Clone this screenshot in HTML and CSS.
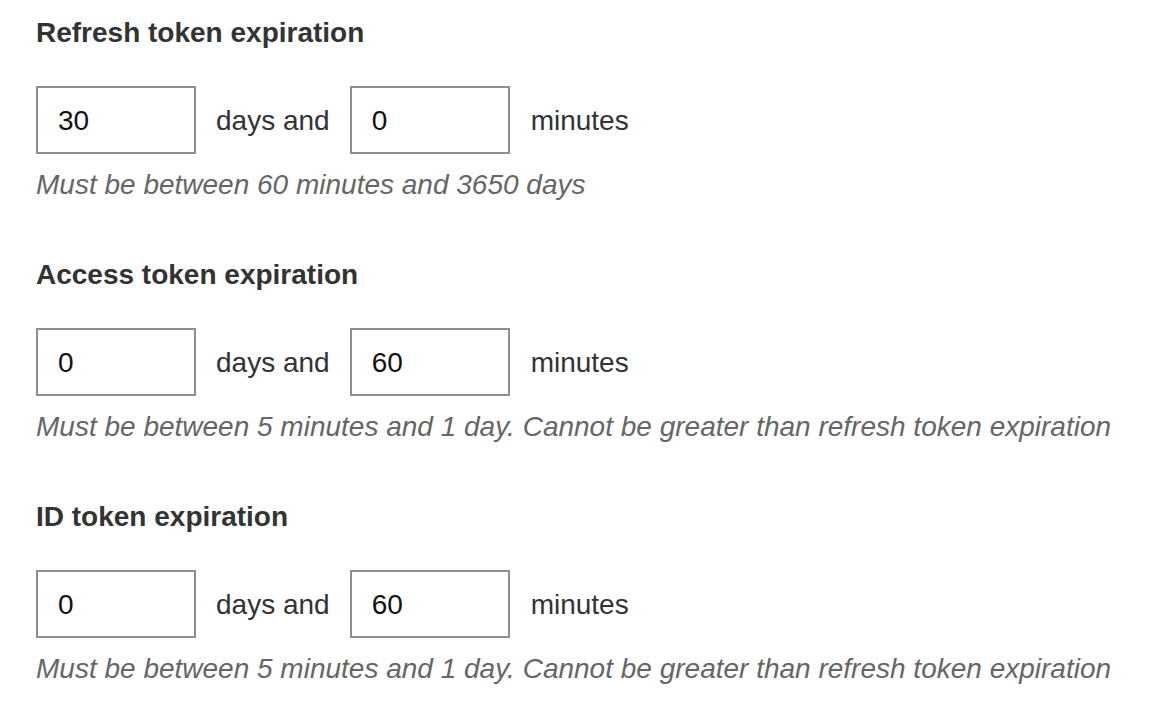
FILE: index.html
```html
<!DOCTYPE html>
<html lang="en">
<head>
<meta charset="utf-8">
<title>Token expiration</title>
<link rel="stylesheet" href="styles.css">
</head>
<body>
<main class="form">
  <section class="field">
    <h2 class="field-title">Refresh token expiration</h2>
    <div class="field-row">
      <input class="num-input" type="text" value="30">
      <span class="unit">days and</span>
      <input class="num-input" type="text" value="0">
      <span class="unit">minutes</span>
    </div>
    <p class="hint">Must be between 60 minutes and 3650 days</p>
  </section>
  <section class="field">
    <h2 class="field-title">Access token expiration</h2>
    <div class="field-row">
      <input class="num-input" type="text" value="0">
      <span class="unit">days and</span>
      <input class="num-input" type="text" value="60">
      <span class="unit">minutes</span>
    </div>
    <p class="hint">Must be between 5 minutes and 1 day. Cannot be greater than refresh token expiration</p>
  </section>
  <section class="field">
    <h2 class="field-title">ID token expiration</h2>
    <div class="field-row">
      <input class="num-input" type="text" value="0">
      <span class="unit">days and</span>
      <input class="num-input" type="text" value="60">
      <span class="unit">minutes</span>
    </div>
    <p class="hint">Must be between 5 minutes and 1 day. Cannot be greater than refresh token expiration</p>
  </section>
</main>
</body>
</html>
```
FILE: styles.css
```css
html, body {
  margin: 0;
  padding: 0;
  background: #ffffff;
}

body {
  font-family: "Liberation Sans", Arial, Helvetica, sans-serif;
  font-size: 28px;
  line-height: 32px;
  color: #333333;
}

.form {
  padding: 17px 0 0 36px;
  display: flex;
  flex-direction: column;
  gap: 58px;
}

.field {
  display: flex;
  flex-direction: column;
}

.field-title {
  margin: 0;
  font-size: 28px;
  line-height: 32px;
  font-weight: 700;
  color: #333333;
}

.field-row {
  margin-top: 37px;
  display: flex;
  align-items: center;
}

.num-input {
  box-sizing: border-box;
  width: 160px;
  height: 68px;
  margin: 0;
  padding: 2px 20px 0;
  border: 2px solid #8f8f8f;
  border-radius: 0;
  background: #ffffff;
  font-family: inherit;
  font-size: 28px;
  line-height: 32px;
  color: #111111;
  outline: none;
}

.unit {
  margin: 0 20px;
  padding-top: 2px;
  color: #333333;
}

.unit:last-child {
  margin-left: 21px;
}

.hint {
  margin: 15px 0 0;
  font-style: italic;
  color: #666666;
}
```
